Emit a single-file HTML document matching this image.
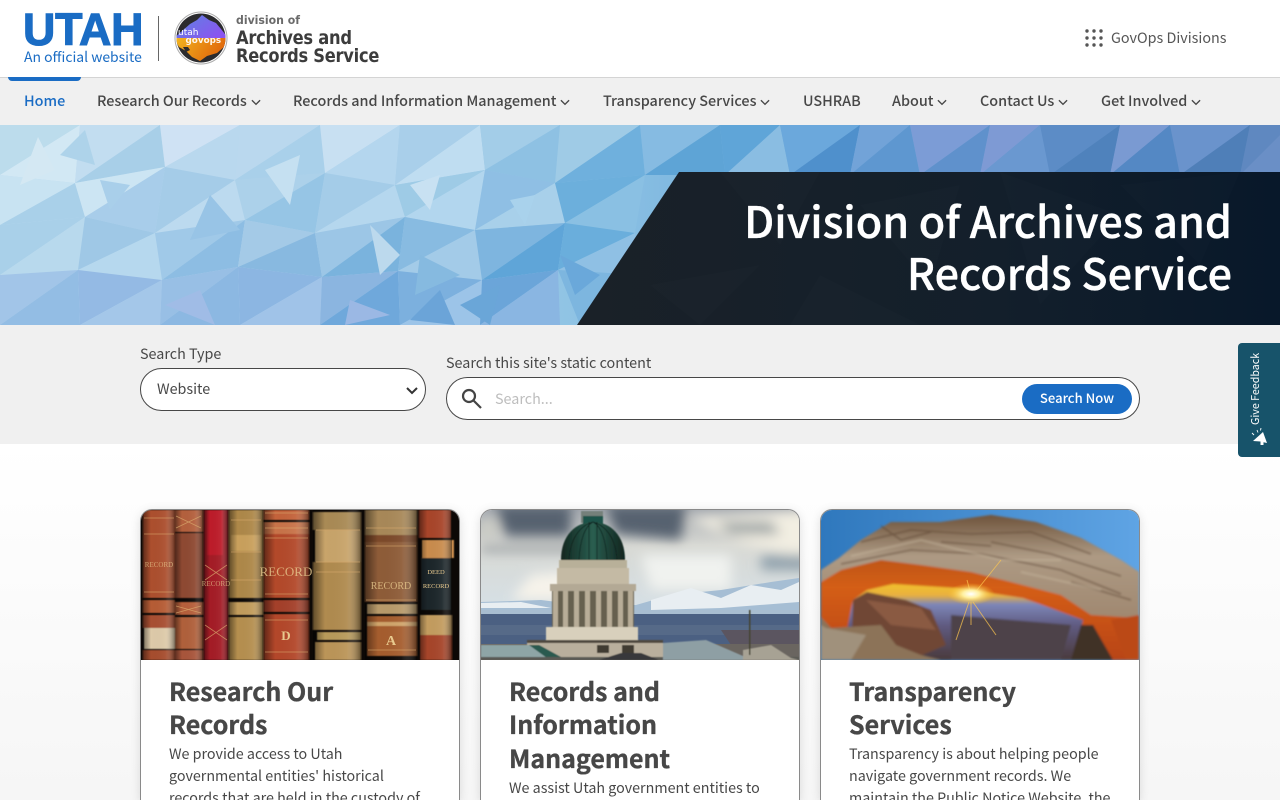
<!DOCTYPE html>
<html lang="en"><head><meta charset="utf-8"><title>Division of Archives and Records Service</title>
<style>
*{box-sizing:border-box}
html,body{margin:0;padding:0;width:1280px;height:800px;overflow:hidden;background:#fff}
body{font-family:"Noto Sans CJK JP","Liberation Sans",sans-serif;color:#474747;position:relative;font-size:14.35px}
.a{position:absolute;white-space:nowrap}
.nav{font-size:14.4px;font-weight:500;color:#474747;top:90px;line-height:22px}
.nav svg{margin-left:4px;vertical-align:0}
.card{position:absolute;top:509px;width:320px;height:291px;border:1px solid #8a8a8a;border-bottom:0;border-radius:12px 12px 0 0;background:#fff;overflow:hidden}
.card svg{display:block}
.card h2{position:absolute;left:28px;top:165px;margin:0;font-size:25px;line-height:33.3px;font-weight:700;color:#474747;-webkit-text-stroke:.35px #474747}
.card p{position:absolute;left:28px;margin:0;font-size:14.3px;line-height:22px;color:#474747;white-space:nowrap}
.shadow{position:absolute;top:509px;width:320px;height:291px;border-radius:12px 12px 0 0;box-shadow:0 2px 10px rgba(0,0,0,.12)}
</style></head><body>
<div class="a" style="left:0;top:444px;width:1280px;height:356px;background:linear-gradient(#fff,#f6f6f6)"></div>

<!-- Header -->
<div class="a" style="left:22.500px;top:2px;font:700 45px/56px 'Liberation Sans',sans-serif;color:#1a6cc4;letter-spacing:-.2px;-webkit-text-stroke:1.1px #1a6cc4;transform-origin:left;transform:scaleX(.995)">UTAH</div>
<div class="a" style="left:24px;top:47px;font-size:13.950px;line-height:20px;color:#1a6cc4">An official website</div>
<div class="a" style="left:158px;top:16px;width:1px;height:45px;background:#666"></div>
<svg class="a" style="left:174px;top:11px" width="55" height="55" viewBox="0 0 55 55">
<defs>
<linearGradient id="lp" x1="0" y1="0" x2="1" y2=".6"><stop offset="0" stop-color="#5a86e0"/><stop offset="1" stop-color="#8a55f0"/></linearGradient>
<linearGradient id="lo" x1="0" y1="0" x2="1" y2=".3"><stop offset="0" stop-color="#f3b71f"/><stop offset="1" stop-color="#e0660c"/></linearGradient>
<clipPath id="lc"><circle cx="27" cy="27" r="24.5"/></clipPath></defs>
<circle cx="27" cy="27" r="26" fill="#fff" stroke="#aaa" stroke-width="1"/>
<circle cx="27" cy="27" r="24.5" fill="#2b2b2e"/>
<g clip-path="url(#lc)">
<path d="M0 27L8 20 16 13 23 9 28 4 35 9 42 12 47 18 54 27Z" fill="url(#lp)"/>
<path d="M0 27H54L50 36 43 42 33 45 26 50 18 46 12 40 5 36Z" fill="url(#lo)"/>
<path d="M9 36l5 0 2 3-4 2z" fill="#2b2b2e"/>
</g>
<text x="4" y="24" font-family="'DejaVu Sans',sans-serif" font-size="9" font-weight="400" fill="#fff">utah</text>
<text x="11.500" y="32" font-family="'DejaVu Sans',sans-serif" font-size="8.800" font-weight="700" fill="#fff" opacity=".92">govops</text>
</svg>
<div class="a" style="left:236px;top:13px;font:700 11.500px/15px 'DejaVu Sans',sans-serif;color:#6a6a6a;transform-origin:left;transform:scaleX(.95)">division of</div>
<div class="a" style="left:236px;top:29px;font:700 18.600px/19px 'DejaVu Sans',sans-serif;color:#3c3c3c;letter-spacing:-.3px;transform-origin:left;transform:scaleX(.877)">Archives and</div>
<div class="a" style="left:236px;top:47px;font:700 18.600px/19px 'DejaVu Sans',sans-serif;color:#3c3c3c;letter-spacing:-.3px;transform-origin:left;transform:scaleX(.875)">Records Service</div>
<svg class="a" style="left:1085px;top:29px" width="18" height="18" fill="#555"><circle cx="2" cy="2" r="1.700"/><circle cx="9" cy="2" r="1.700"/><circle cx="16" cy="2" r="1.700"/><circle cx="2" cy="9" r="1.700"/><circle cx="9" cy="9" r="1.700"/><circle cx="16" cy="9" r="1.700"/><circle cx="2" cy="16" r="1.700"/><circle cx="9" cy="16" r="1.700"/><circle cx="16" cy="16" r="1.700"/></svg>
<div class="a" style="left:1111px;top:27px;font-size:14.350px;line-height:22px;color:#555">GovOps Divisions</div>

<!-- Nav -->
<div class="a" style="left:0;top:77px;width:1280px;height:48px;background:#f0f0f0;border-top:1px solid #d4d4d4"></div>
<div class="a" style="left:8px;top:77px;width:73px;height:4px;background:#1a6cc4;border-radius:0 0 4px 4px"></div>
<div class="a nav" style="left:24px;color:#1a6cc4">Home</div>
<div class="a nav" style="left:97px">Research Our Records<svg width="10" height="7" viewBox="0 0 11 7" fill="none" stroke="#474747" stroke-width="1.500"><path d="M1 1l4.500 4.500L10 1"/></svg></div>
<div class="a nav" style="left:293px">Records and Information Management<svg width="10" height="7" viewBox="0 0 11 7" fill="none" stroke="#474747" stroke-width="1.500"><path d="M1 1l4.500 4.500L10 1"/></svg></div>
<div class="a nav" style="left:603px">Transparency Services<svg width="10" height="7" viewBox="0 0 11 7" fill="none" stroke="#474747" stroke-width="1.500"><path d="M1 1l4.500 4.500L10 1"/></svg></div>
<div class="a nav" style="left:803px">USHRAB</div>
<div class="a nav" style="left:892px">About<svg width="10" height="7" viewBox="0 0 11 7" fill="none" stroke="#474747" stroke-width="1.500"><path d="M1 1l4.500 4.500L10 1"/></svg></div>
<div class="a nav" style="left:980px">Contact Us<svg width="10" height="7" viewBox="0 0 11 7" fill="none" stroke="#474747" stroke-width="1.500"><path d="M1 1l4.500 4.500L10 1"/></svg></div>
<div class="a nav" style="left:1101px">Get Involved<svg width="10" height="7" viewBox="0 0 11 7" fill="none" stroke="#474747" stroke-width="1.500"><path d="M1 1l4.500 4.500L10 1"/></svg></div>

<!-- Hero -->
<svg class="a" style="left:0;top:125px" width="1280" height="200" viewBox="0 0 1280 200">
<defs>
<linearGradient id="hb" x1="0" y1="0" x2="1" y2="0"><stop offset="0" stop-color="#c0dcef"/><stop offset=".25" stop-color="#b0d3ec"/><stop offset=".45" stop-color="#8fc3e4"/><stop offset=".6" stop-color="#74b0dd"/><stop offset=".75" stop-color="#6a9fd4"/><stop offset="1" stop-color="#5b82bb"/></linearGradient>
<linearGradient id="hd" x1="0" y1="0" x2="1" y2="0"><stop offset="0" stop-color="#1a2128"/><stop offset=".6" stop-color="#131f2b"/><stop offset="1" stop-color="#08182a"/></linearGradient>
</defs>
<rect width="1280" height="200" fill="url(#hb)"/>
<g stroke-width=".5">
<path fill="#bcdcec" d="M0 0L80 0 0 50Z"/><path fill="#d2e8f4" d="M80 0L75 58 0 50Z"/>
<path fill="#c2ddf0" d="M80 0L160 0 75 58Z"/><path fill="#a8cfe8" d="M160 0L165 42 75 58Z"/>
<path fill="#cfe2f4" d="M160 0L240 0 165 42Z"/><path fill="#b9d8ee" d="M240 0L235 55 165 42Z"/>
<path fill="#bad8ee" d="M240 0L320 0 235 55Z"/><path fill="#a9d0ea" d="M320 0L325 48 235 55Z"/>
<path fill="#c8e0f2" d="M320 0L400 0 325 48Z"/><path fill="#b4d6ee" d="M400 0L395 60 325 48Z"/>
<path fill="#a9cfea" d="M400 0L480 0 395 60Z"/><path fill="#bfddf1" d="M480 0L485 45 395 60Z"/>
<path fill="#a3cde8" d="M480 0L560 0 485 45Z"/><path fill="#8ec1e3" d="M560 0L555 58 485 45Z"/>
<path fill="#9fcbe6" d="M560 0L640 0 555 58Z"/><path fill="#6fb0dd" d="M640 0L645 50 555 58Z"/>
<path fill="#86bbe2" d="M640 0L720 0 645 50Z"/><path fill="#5ea4d6" d="M720 0L725 50 645 50Z"/>
<path fill="#c8e3f2" d="M0 50L75 58 0 100Z"/><path fill="#a9d0e9" d="M75 58L85 92 0 100Z"/>
<path fill="#cce5f3" d="M75 58L165 42 85 92Z"/><path fill="#a8cdea" d="M165 42L155 108 85 92Z"/>
<path fill="#a5cce8" d="M165 42L235 55 155 108Z"/><path fill="#bcdaef" d="M235 55L245 95 155 108Z"/>
<path fill="#acd1ea" d="M235 55L325 48 245 95Z"/><path fill="#96c5e5" d="M325 48L315 108 245 95Z"/>
<path fill="#a4cce8" d="M325 48L395 60 315 108Z"/><path fill="#b5d7ee" d="M395 60L405 92 315 108Z"/>
<path fill="#9ecbe6" d="M395 60L485 45 405 92Z"/><path fill="#b2d6ee" d="M485 45L475 105 405 92Z"/>
<path fill="#8fbfe4" d="M485 45L555 58 475 105Z"/><path fill="#a8d0ea" d="M555 58L565 98 475 105Z"/>
<path fill="#6cafdc" d="M555 58L645 50 565 98Z"/><path fill="#8ac0e3" d="M645 50L635 108 565 98Z"/>
<path fill="#a9d0e9" d="M0 100L85 92 0 150Z"/><path fill="#b8d9ed" d="M85 92L78 145 0 150Z"/>
<path fill="#9fc8e6" d="M85 92L155 108 78 145Z"/><path fill="#b6d8ee" d="M155 108L162 155 78 145Z"/>
<path fill="#a0c9e8" d="M155 108L245 95 162 155Z"/><path fill="#8dbde3" d="M245 95L238 142 162 155Z"/>
<path fill="#a4cae7" d="M245 95L315 108 238 142Z"/><path fill="#88b9e0" d="M315 108L322 152 238 142Z"/>
<path fill="#9cc6e6" d="M315 108L405 92 322 152Z"/><path fill="#7ab3dd" d="M405 92L398 146 322 152Z"/>
<path fill="#88bbe1" d="M405 92L475 105 398 146Z"/><path fill="#a3cbe8" d="M475 105L482 155 398 146Z"/>
<path fill="#7eb5df" d="M475 105L565 98 482 155Z"/><path fill="#5fa5d8" d="M565 98L558 145 482 155Z"/>
<path fill="#6aaedc" d="M565 98L635 108 558 145Z"/><path fill="#8fc0e4" d="M635 108L642 150 558 145Z"/>
<path fill="#a2c5e8" d="M0 150L78 145 0 200Z"/><path fill="#93bde4" d="M78 145L80 200 0 200Z"/>
<path fill="#94bae4" d="M78 145L162 155 80 200Z"/><path fill="#a4c7e9" d="M162 155L160 200 80 200Z"/>
<path fill="#98bfe5" d="M162 155L238 142 160 200Z"/><path fill="#8cb8e2" d="M238 142L240 200 160 200Z"/>
<path fill="#8cb6e2" d="M238 142L322 152 240 200Z"/><path fill="#a0c3e8" d="M322 152L320 200 240 200Z"/>
<path fill="#8bb5e0" d="M322 152L398 146 320 200Z"/><path fill="#6fa8db" d="M398 146L400 200 320 200Z"/>
<path fill="#7cb0de" d="M398 146L482 155 400 200Z"/><path fill="#9cc4e8" d="M482 155L480 200 400 200Z"/>
<path fill="#6ba5d9" d="M482 155L558 145 480 200Z"/><path fill="#8ab6e2" d="M558 145L560 200 480 200Z"/>
<path fill="#7db6df" d="M558 145L642 150 580 200Z"/>
<!-- extra facets -->
<path fill="#d4e8f3" d="M38 12L55 45 20 60Z"/><path fill="#aed3ea" d="M85 5L60 30 95 40Z"/><path fill="#a9cfea" d="M100 55L130 60 110 85Z"/><path fill="#c5e0f1" d="M265 45L300 30 290 80Z"/><path fill="#98c4e6" d="M210 70L240 105 190 115Z"/><path fill="#bcd9ed" d="M370 100L400 130 380 150Z"/><path fill="#86bae0" d="M420 130L460 150 415 170Z"/><path fill="#6aa8da" d="M560 130L600 150 575 170Z"/><path fill="#6aa6d8" d="M460 180L500 160 490 200Z"/><path fill="#c8e1f2" d="M410 60L440 50 430 85Z"/><path fill="#a9d2ec" d="M510 75L535 70 525 100Z"/><path fill="#6ba4d8" d="M410 195L440 165 455 200Z"/><path fill="#a0bce6" d="M165 180L200 165 215 200Z"/><path fill="#9bb8e4" d="M350 175L390 190 345 200Z"/>
<!-- top right strip -->
<path fill="#5fa5d8" d="M720 0L780 0 725 50Z"/><path fill="#8abde2" d="M780 0L790 50 725 50Z"/>
<path fill="#6ba8dc" d="M780 0L860 0 790 50Z"/><path fill="#4f90cc" d="M860 0L850 50 790 50Z"/>
<path fill="#72a3d8" d="M860 0L910 0 850 50Z"/><path fill="#5e97d0" d="M910 0L920 50 850 50Z"/>
<path fill="#7c9cd6" d="M910 0L990 0 920 50Z"/><path fill="#5f91cc" d="M990 0L980 50 920 50Z"/>
<path fill="#7e9ad4" d="M990 0L1040 0 980 50Z"/><path fill="#6a98d0" d="M1040 0L1050 50 980 50Z"/>
<path fill="#5c8cc6" d="M1040 0L1120 0 1050 50Z"/><path fill="#4f82bc" d="M1120 0L1110 50 1050 50Z"/>
<path fill="#7a9ad2" d="M1120 0L1170 0 1110 50Z"/><path fill="#5488c4" d="M1170 0L1180 50 1110 50Z"/>
<path fill="#6a93cc" d="M1170 0L1250 0 1180 50Z"/><path fill="#4f7fb8" d="M1250 0L1240 50 1180 50Z"/>
<path fill="#5f88c0" d="M1250 0L1290 0 1240 50Z"/><path fill="#6a8fc6" d="M1290 0L1290 50 1240 50Z"/>
</g>
<path d="M679 47H1280V200H577Z" fill="url(#hd)"/>
<path fill="#fff" opacity=".012" d="M720 47L820 47 780 120ZM860 80L960 60 930 160ZM1000 47L1120 90 1040 180ZM650 160L760 140 700 200ZM820 150L920 200 790 200ZM1120 60L1240 47 1200 140Z"/>
</svg>
<div class="a" style="right:48px;top:194px;text-align:right;font-size:43.100px;line-height:52px;font-weight:500;color:#fff;-webkit-text-stroke:.35px #fff">Division of Archives and<br>Records Service</div>

<!-- Search band -->
<div class="a" style="left:0;top:325px;width:1280px;height:119px;background:#f0f0f0"></div>
<div class="a" style="left:140px;top:343px;line-height:21px">Search Type</div>
<div class="a" style="left:140px;top:368px;width:286px;height:43px;background:#fff;border:1px solid #474747;border-radius:21.500px"></div>
<div class="a" style="left:157px;top:378px;line-height:21px">Website</div>
<svg class="a" style="left:406px;top:387px" width="12" height="8" viewBox="0 0 12 8" fill="none" stroke="#333" stroke-width="2"><path d="M1 1l5 5 5-5"/></svg>
<div class="a" style="left:446px;top:352px;line-height:21px">Search this site's static content</div>
<div class="a" style="left:446px;top:377px;width:694px;height:43px;background:#fff;border:1px solid #474747;border-radius:21.500px"></div>
<svg class="a" style="left:461px;top:388px" width="21" height="21" viewBox="0 0 21 21" fill="none" stroke="#444" stroke-width="2.200"><circle cx="8" cy="8" r="6"/><path d="M12.500 12.500L20 20"/></svg>
<div class="a" style="left:495px;top:388px;line-height:21px;color:#bdbdbd">Search...</div>
<div class="a" style="left:1022px;top:384px;width:110px;height:30px;background:#1a6cc4;border-radius:15px;color:#fff;font-size:13.100px;font-weight:500;line-height:28px;text-align:center">Search Now</div>

<!-- Feedback -->
<div class="a" style="left:1238px;top:343px;width:42px;height:114px;background:#17536a;border-radius:4px 0 0 4px"></div>
<div class="a" style="left:1249px;top:351px;height:76px;width:14px;writing-mode:vertical-rl;transform:rotate(180deg);font-size:10.700px;line-height:14px;color:#fff;text-align:center">Give Feedback</div>
<svg class="a" style="left:1251px;top:428px" width="18" height="18" viewBox="0 0 18 18" fill="#fff"><path d="M2 13L12 4 16 15 12.500 14.200 12.500 17 9.500 17 9.500 13.500Z"/><path d="M1 5l2 2M6 2l1 2.500M10 0l-.5 2.500" stroke="#fff" stroke-width=".9" fill="none"/></svg>

<!-- Card 1 -->
<div class="shadow" style="left:140px"></div><div class="shadow" style="left:480px"></div><div class="shadow" style="left:820px"></div>
<div class="card" style="left:140px">
<svg width="318" height="150" viewBox="0 0 318 150">
<defs><filter id="b1"><feGaussianBlur stdDeviation=".5"/></filter>
<linearGradient id="sh" x1="0" y1="0" x2="1" y2="0"><stop offset="0" stop-color="#000" stop-opacity=".45"/><stop offset=".25" stop-color="#000" stop-opacity="0"/><stop offset=".7" stop-color="#fff" stop-opacity=".05"/><stop offset="1" stop-color="#000" stop-opacity=".45"/></linearGradient></defs>
<rect width="318" height="150" fill="#0c0806"/>
<g filter="url(#b1)">
<rect x="2" y="0" width="32" height="88" fill="#ac4f2e"/><rect x="2" y="90" width="32" height="13" fill="#b65b36"/><rect x="2" y="105" width="32" height="13" fill="#a84f30"/><rect x="3" y="118" width="31" height="21" fill="#ddcaa9"/><rect x="2" y="140" width="32" height="10" fill="#a64d2e"/>
<rect x="34" y="0" width="28" height="22" fill="#b4603c"/><rect x="34" y="23" width="28" height="65" fill="#8e4a30"/><rect x="34" y="92" width="28" height="13" fill="#b65f3a"/><rect x="34" y="107" width="28" height="32" fill="#b0603a"/><rect x="34" y="140" width="28" height="10" fill="#a8553a"/>
<rect x="63" y="0" width="24" height="150" fill="#a41f28"/><rect x="66" y="0" width="16" height="45" fill="#bd1f2c"/>
<rect x="88" y="0" width="34" height="88" fill="#ae8848"/><rect x="88" y="92" width="34" height="13" fill="#c29c5c"/><rect x="88" y="107" width="34" height="43" fill="#b58f50"/><rect x="90" y="25" width="30" height="16" fill="#c9a05c"/>
<rect x="123" y="0" width="45" height="10" fill="#c4643a"/><rect x="123" y="12" width="45" height="12" fill="#c8734a"/><rect x="123" y="24" width="45" height="64" fill="#b3482b"/><rect x="123" y="90" width="45" height="12" fill="#a43f29"/><rect x="123" y="104" width="45" height="46" fill="#b3472b"/>
<rect x="172" y="2" width="48" height="18" fill="#a98a55"/><rect x="174" y="20" width="46" height="32" fill="#c8a46a"/><rect x="172" y="52" width="48" height="68" fill="#b08b50"/><rect x="176" y="122" width="44" height="8" fill="#b89a5a"/><rect x="174" y="132" width="46" height="18" fill="#bb9559"/>
<rect x="224" y="0" width="52" height="25" fill="#a88858"/><rect x="224" y="25" width="52" height="7" fill="#7b4a2b"/><rect x="224" y="32" width="52" height="60" fill="#8e5c38"/><rect x="226" y="94" width="50" height="10" fill="#b89a6a"/><rect x="226" y="106" width="50" height="40" fill="#a55d2e"/><rect x="226" y="112" width="50" height="4" fill="#d0a46a"/>
<rect x="278" y="0" width="32" height="28" fill="#a8452c"/><rect x="281" y="30" width="32" height="18" fill="#c98c4d"/><rect x="280" y="48" width="30" height="52" fill="#1d2829"/><rect x="279" y="105" width="32" height="20" fill="#c39c5f"/><rect x="279" y="125" width="32" height="25" fill="#a6452c"/>
</g>
<g fill="url(#sh)"><rect x="2" y="0" width="32" height="150"/><rect x="34" y="0" width="28" height="150"/><rect x="63" y="0" width="24" height="150"/><rect x="88" y="0" width="34" height="150"/><rect x="123" y="0" width="45" height="150"/><rect x="172" y="0" width="48" height="150"/><rect x="224" y="0" width="52" height="150"/><rect x="278" y="0" width="33" height="150"/></g>
<g stroke="#dcae70" stroke-width=".8" opacity=".7" fill="none">
<path d="M3 8H33M3 24H33M3 82H33M35 6L60 18M60 6L35 18M35 96L60 103M60 96L35 103M64 55L86 70M86 55L64 70M64 115L86 130M86 115L64 130M90 10H120M90 42H120M90 70H120M124 3H167M124 18H167M124 28H167M124 84H167M124 110H167M124 142H167M175 20H219M175 52H219M175 62H219M225 18H275M225 36H275M225 90H275M227 140H275"/></g>
<g font-family="'Liberation Serif',serif" fill="#e8c98e" text-anchor="middle">
<text x="145" y="66" font-size="13" opacity=".8">RECORD</text><text x="145" y="130" font-size="13" font-weight="700">D</text>
<text x="250" y="79" font-size="10" opacity=".8">RECORD</text><text x="250" y="135" font-size="14" font-weight="700">A</text>
<text x="295" y="64" font-size="6.500">DEED</text><text x="295" y="78" font-size="6.500">RECORD</text><text x="18" y="57" font-size="7" opacity=".7">RECORD</text><text x="75" y="76" font-size="7" opacity=".7">RECORD</text>
</g>
</svg>
<h2>Research Our<br>Records</h2>
<p style="top:233px">We provide access to Utah<br>governmental entities' historical<br>records that are held in the custody of</p>
</div>

<!-- Card 2 -->
<div class="card" style="left:480px">
<svg width="318" height="150" viewBox="0 0 318 150">
<defs><linearGradient id="s2" x1="0" y1="0" x2="0" y2="1"><stop offset="0" stop-color="#a5aab0"/><stop offset=".35" stop-color="#d8d9d4"/><stop offset="1" stop-color="#d6e0e6"/></linearGradient>
<linearGradient id="dm" x1="0" y1="0" x2="1" y2="0"><stop offset="0" stop-color="#11261f"/><stop offset=".5" stop-color="#2a5e50"/><stop offset="1" stop-color="#10241e"/></linearGradient>
<filter id="b2"><feGaussianBlur stdDeviation="6"/></filter><filter id="b3"><feGaussianBlur stdDeviation=".4"/></filter></defs>
<rect width="318" height="100" fill="url(#s2)"/>
<g filter="url(#b2)">
<path d="M15 -5H90V26H25ZM125 -5H205L200 30 135 24Z" fill="#56626f"/>
<path d="M205 8L330 0V50L260 32Z" fill="#f2eee2"/><path d="M235 12L290 12 300 24 250 24Z" fill="#98a0a2"/>
<path d="M0 36H95V41H0Z" fill="#7f868e"/><path d="M50 65L100 60 110 90 30 90Z" fill="#f6f3ea"/><path d="M160 45H250V80H170Z" fill="#f0f2ef"/><path d="M280 45H330V60H280Z" fill="#8fa0ac"/><path d="M0 10H15V25H0Z" fill="#cfcfc6"/>
</g>
<path d="M0 92L60 90 100 95H155L190 85 240 80 290 72 318 68V105H0Z" fill="#a6bed4"/>
<path d="M170 90L210 78 240 88 270 75 300 80 318 72V92L240 98 170 100ZM0 93L40 92 70 98 0 98Z" fill="#e8eef2"/>
<rect y="100" width="318" height="50" fill="#4b6082"/><rect y="100" width="318" height="4" fill="#a8bdd0"/><rect y="115" width="318" height="10" fill="#566a88"/><path d="M240 120H318V135H250Z" fill="#5b5560"/><rect y="134" width="318" height="16" fill="#6a6560"/>
<g filter="url(#b3)">
<rect x="100" y="1" width="22" height="12" fill="#75807a"/><rect x="102" y="6" width="20" height="8" fill="#1e5248"/>
<path d="M80 50C80 25 95 12 112 12S144 25 144 50Z" fill="url(#dm)"/>
<path d="M88 50C89 30 98 16 112 12M98 50C99 30 104 16 112 12M108 50V12M116 50V12M126 50C125 30 120 16 112 12M136 50C135 30 126 16 112 12" stroke="#0d1f1a" stroke-width=".7" fill="none"/>
<rect x="78" y="50" width="68" height="8" fill="#b8b099"/><rect x="76" y="58" width="72" height="18" fill="#c4baa4"/>
<rect x="69" y="74" width="86" height="7" fill="#b3a995"/>
<rect x="71" y="81" width="82" height="36" fill="#66604f"/>
<g fill="#b8ad98"><rect x="72" y="81" width="5" height="36"/><rect x="82" y="81" width="5" height="36"/><rect x="93" y="81" width="5" height="36"/><rect x="104" y="81" width="5" height="36"/><rect x="115" y="81" width="5" height="36"/><rect x="126" y="81" width="5" height="36"/><rect x="137" y="81" width="5" height="36"/><rect x="147" y="81" width="5" height="36"/></g>
<rect x="65" y="117" width="92" height="13" fill="#d8d0bc"/>
<rect x="46" y="130" width="136" height="20" fill="#b9af9d"/><rect x="46" y="130" width="136" height="3" fill="#504a40"/>
<rect x="116" y="135" width="12" height="8" fill="#403a33"/><rect x="141" y="135" width="12" height="8" fill="#403a33"/>
<path d="M0 135H58L80 147 80 150H0Z" fill="#8ea5a6"/><path d="M58 135L80 147 66 148 48 135Z" fill="#2b5a50"/><rect y="147" width="318" height="3" fill="#5a5a55"/>
<path d="M182 133L225 130 262 146 262 150H182Z" fill="#8e9fa4"/><path d="M262 140L290 135 310 148 318 150H262Z" fill="#a7a294"/>
<path d="M118 150L140 143 160 143 178 150Z" fill="#37393a"/>
<rect x="268" y="100" width="1.500" height="45" fill="#443"/>
</g>
</svg>
<h2>Records and<br>Information<br>Management</h2>
<p style="top:267px">We assist Utah government entities to</p>
</div>

<!-- Card 3 -->
<div class="card" style="left:820px">
<svg width="318" height="150" viewBox="0 0 318 150">
<defs><linearGradient id="s3" x1="0" y1="0" x2="1" y2="0"><stop offset="0" stop-color="#2f78bd"/><stop offset="1" stop-color="#5fa4e4"/></linearGradient>
<linearGradient id="op" x1="0" y1="0" x2="0" y2="1"><stop offset="0" stop-color="#f2c02c"/><stop offset=".15" stop-color="#e8b040"/><stop offset=".27" stop-color="#7d86b8"/><stop offset=".55" stop-color="#5f5a80"/><stop offset="1" stop-color="#4a3a3c"/></linearGradient>
<linearGradient id="or" x1="0" y1="0" x2="0" y2="1"><stop offset="0" stop-color="#9e4a1c"/><stop offset=".5" stop-color="#d45e18"/><stop offset="1" stop-color="#b84414"/></linearGradient>
<linearGradient id="rk" x1="0" y1="0" x2="0" y2="1"><stop offset="0" stop-color="#6f543c"/><stop offset=".4" stop-color="#ad9a84"/><stop offset="1" stop-color="#a08870"/></linearGradient>
<filter id="b4"><feGaussianBlur stdDeviation="1"/></filter><radialGradient id="sun"><stop offset="0" stop-color="#fff" /><stop offset=".35" stop-color="#fff0a0"/><stop offset="1" stop-color="#ffc020" stop-opacity="0"/></radialGradient></defs>
<rect width="318" height="150" fill="url(#s3)"/>
<g filter="url(#b4)">
<path d="M0 60L18 48 40 30 70 12 120 12 170 5 215 12 260 28 300 50 318 62V150H0Z" fill="url(#or)"/>
<path d="M0 72L0 60 18 48 40 30 70 12 120 12 170 5 215 12 260 28 300 50 318 62V108L270 105 240 85 190 72 150 62 100 55 60 50 20 60Z" fill="url(#rk)"/>
<path d="M40 32L90 20 150 24 210 22 270 44M20 54L90 40 160 44 240 60 300 84M60 16L80 30 110 22M170 32L230 44 300 66M120 32L170 36M250 72L310 90" stroke="#5c4532" stroke-width="1.600" fill="none" opacity=".6"/>
<path d="M30 46L100 30 180 50 240 50M200 62L280 80" stroke="#c8b8a0" stroke-width="2" fill="none" opacity=".5"/>
<path d="M32 90L46 80 72 74 136 78 202 88 262 110 252 150H20Z" fill="url(#op)"/>
<path d="M32 90L46 82 85 90 110 100 125 135 90 150H30Z" fill="#6f4634"/>
<path d="M45 90L100 98 115 120 70 115Z" fill="#8a5a42"/>
<path d="M130 105L250 115 240 150H130Z" fill="#4e4348"/>
<path d="M0 107L10 118 60 115 75 135 100 145 120 150H0Z" fill="#8c7358"/>
<path d="M0 115L5 118 45 125 30 150 0 150Z" fill="#a0917c"/>
<path d="M260 115L272 115 292 150H250Z" fill="#3f3026"/>
<path d="M290 110L318 105V150H305Z" fill="#bb4a12"/>
</g>
<g stroke="#ffc850" stroke-width="1" opacity=".7"><path d="M148 92L135 130M152 92L175 125M150 92V115M150 85L146 70M152 85L180 50"/></g>
<ellipse cx="150" cy="84" rx="24" ry="11" fill="url(#sun)"/>
</svg>
<h2>Transparency<br>Services</h2>
<p style="top:233px">Transparency is about helping people<br>navigate government records. We<br>maintain the Public Notice Website, the</p>
</div>
</body></html>
